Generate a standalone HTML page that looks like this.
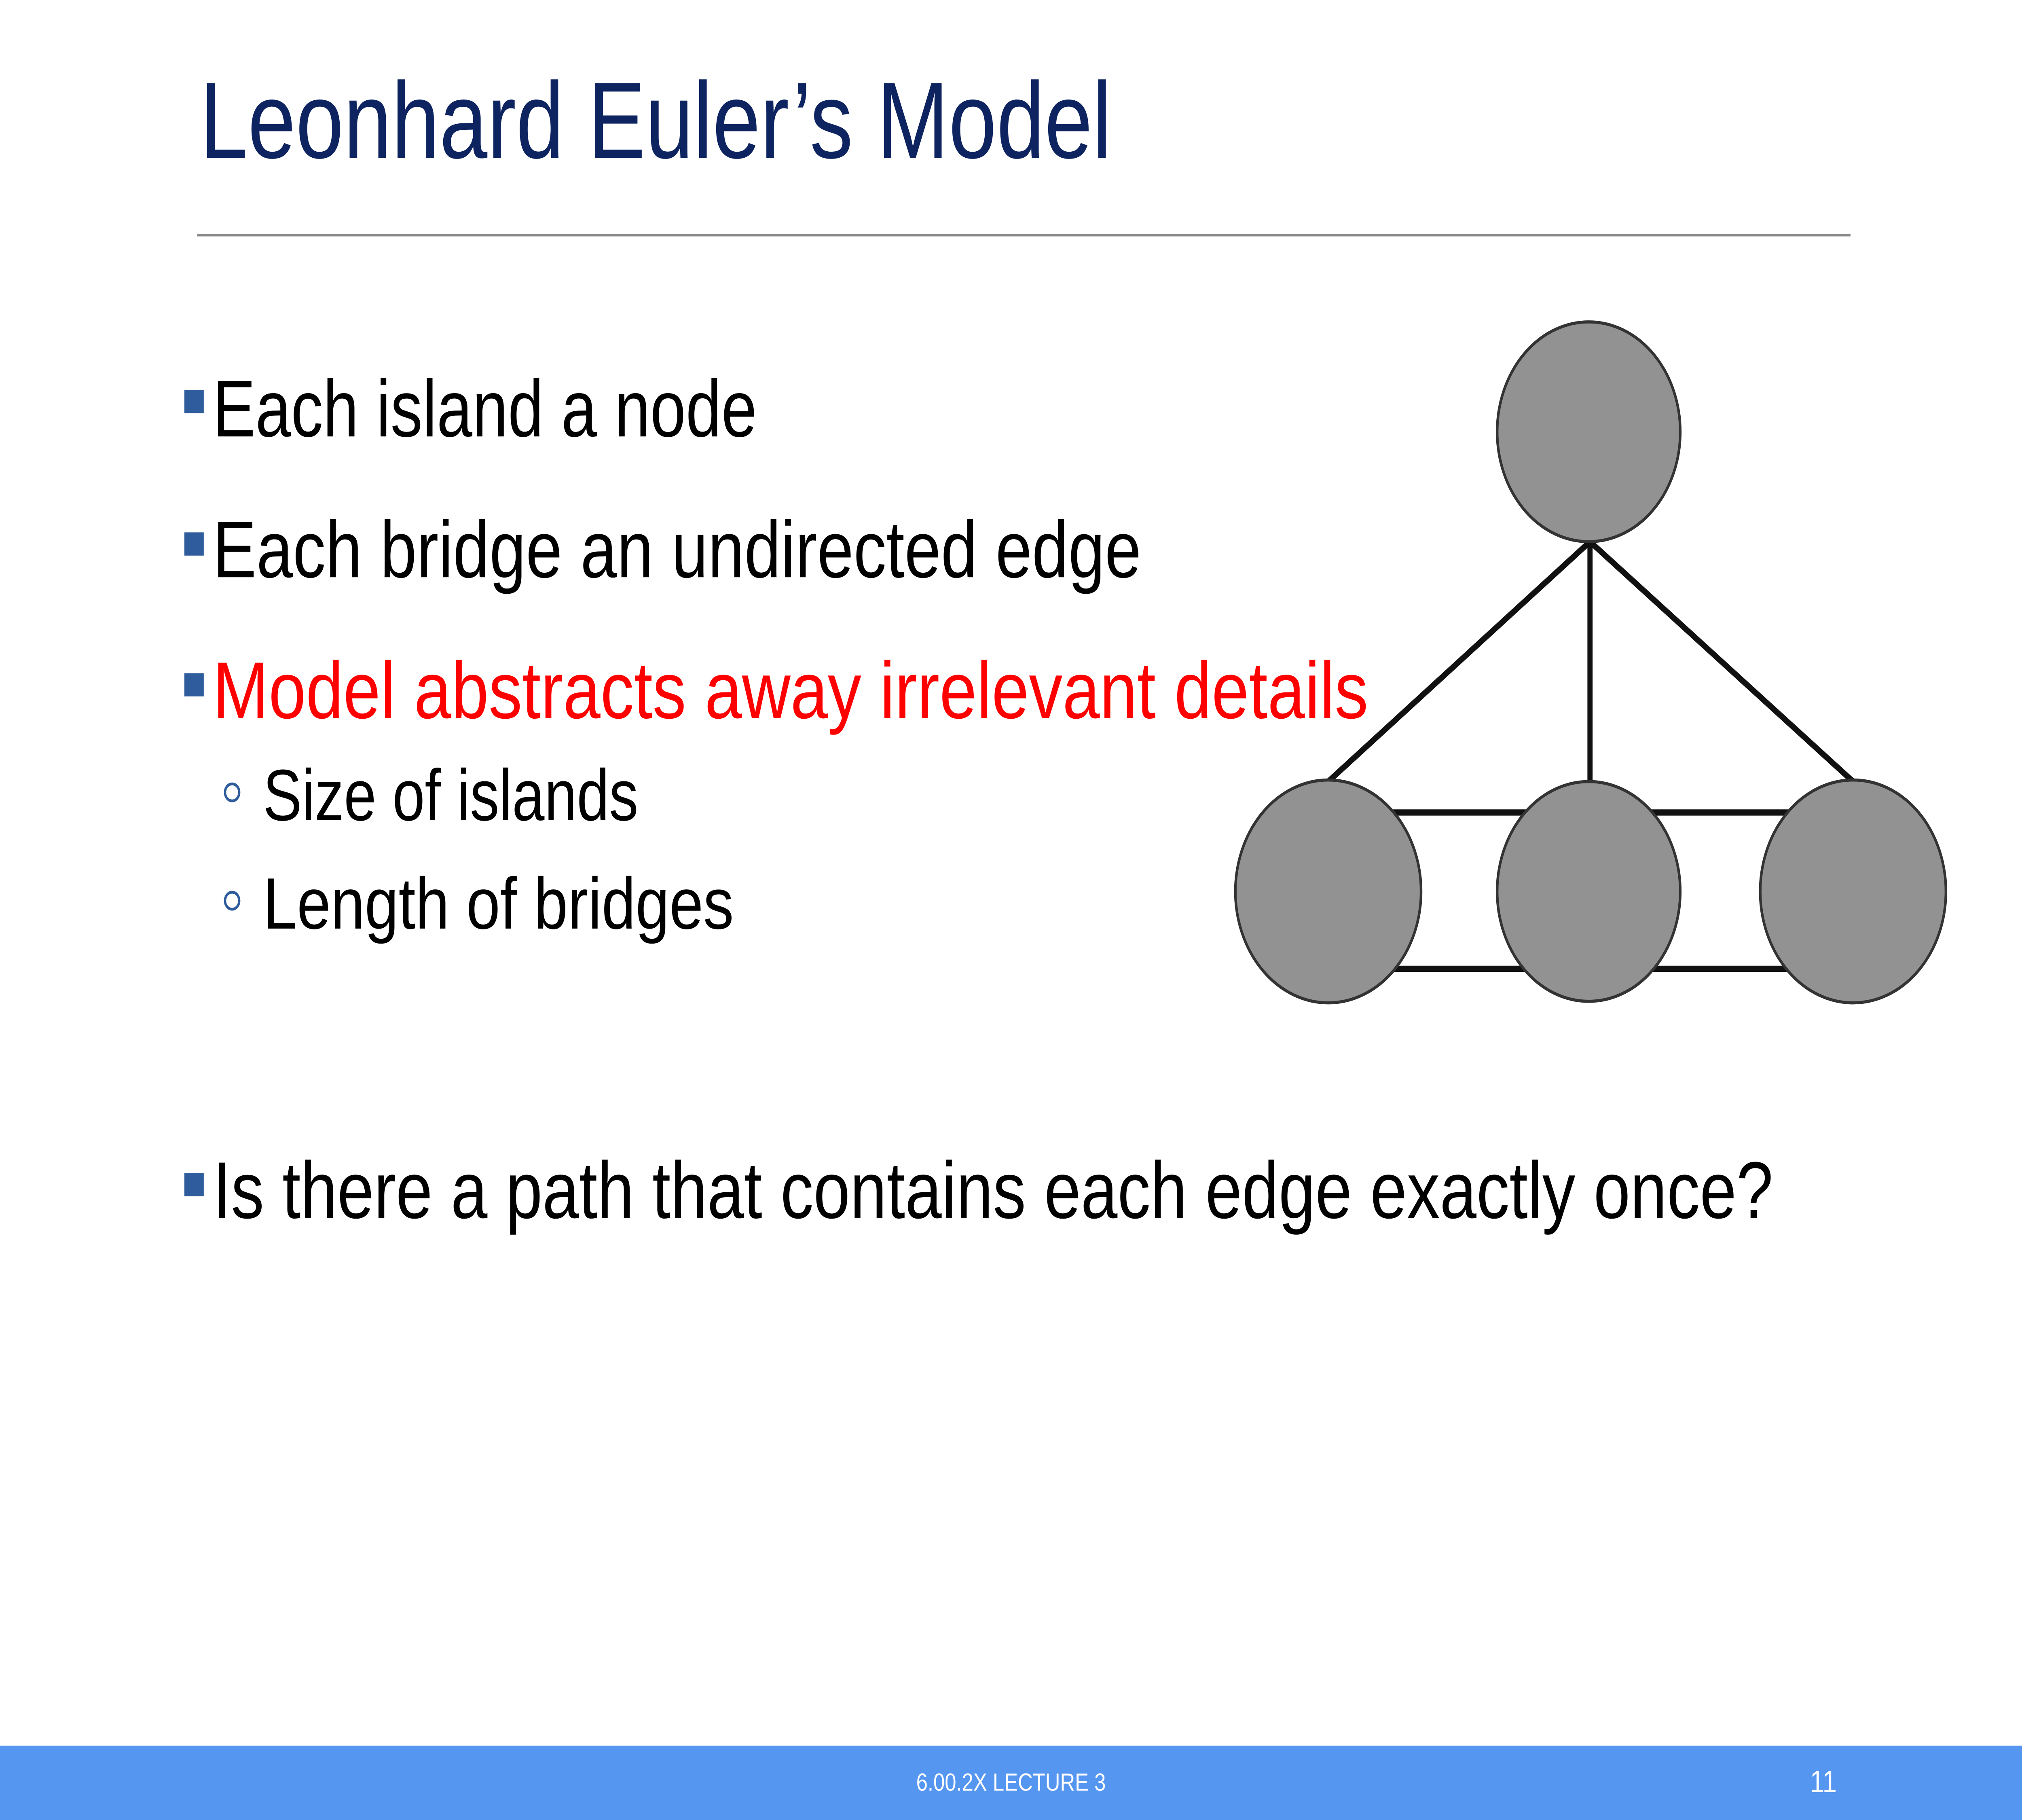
<!DOCTYPE html>
<html><head><meta charset="utf-8"><style>
html,body{margin:0;padding:0;background:#fff;overflow:hidden;width:100%;height:100%}
svg{display:block;position:fixed;left:0;top:0;width:100vw;height:100vh}
</style></head><body>
<svg viewBox="0 0 1568 1176" preserveAspectRatio="none" xmlns="http://www.w3.org/2000/svg" font-family="Liberation Sans, sans-serif">
<rect width="1568" height="1176" fill="#fff"/>
<text x="155" y="102" font-size="70" fill="#0e2461" textLength="707" lengthAdjust="spacingAndGlyphs">Leonhard Euler’s Model</text>
<line x1="153" y1="152" x2="1435" y2="152" stroke="#8a8a8a" stroke-width="1.5"/>
<rect x="143" y="252" width="15" height="15" fill="#2f5c9c"/>
<text x="165" y="282" font-size="52" fill="#000" textLength="422" lengthAdjust="spacingAndGlyphs">Each island a node</text>
<rect x="143" y="344" width="15" height="15" fill="#2f5c9c"/>
<text x="165" y="373" font-size="52" fill="#000" textLength="720" lengthAdjust="spacingAndGlyphs">Each bridge an undirected edge</text>
<rect x="143" y="435" width="15" height="15" fill="#2f5c9c"/>
<text x="165" y="464" font-size="52" fill="#ff0000" textLength="896" lengthAdjust="spacingAndGlyphs">Model abstracts away irrelevant details</text>
<circle cx="180" cy="512" r="5.5" fill="none" stroke="#2f5c9c" stroke-width="1.8"/>
<text x="204" y="530" font-size="47" fill="#000" textLength="291" lengthAdjust="spacingAndGlyphs">Size of islands</text>
<circle cx="180" cy="582" r="5.5" fill="none" stroke="#2f5c9c" stroke-width="1.8"/>
<text x="204" y="600" font-size="47" fill="#000" textLength="365" lengthAdjust="spacingAndGlyphs">Length of bridges</text>
<rect x="143" y="758" width="15" height="15" fill="#2f5c9c"/>
<text x="165" y="787" font-size="52" fill="#000" textLength="1210" lengthAdjust="spacingAndGlyphs">Is there a path that contains each edge exactly once?</text>
<g stroke="#111" stroke-width="4" fill="none">
<line x1="1233" y1="350" x2="1030" y2="505"/>
<line x1="1233" y1="350" x2="1233" y2="505"/>
<line x1="1233" y1="350" x2="1437" y2="505"/>
<line x1="1080" y1="525" x2="1390" y2="525"/>
<line x1="1080" y1="626" x2="1390" y2="626"/>
</g>
<g fill="#929292" stroke="#333" stroke-width="2">
<circle cx="1232" cy="279" r="71"/>
<circle cx="1030" cy="576" r="72"/>
<circle cx="1232" cy="576" r="71"/>
<circle cx="1437" cy="576" r="72"/>
</g>
<rect x="0" y="1128" width="1568" height="48" fill="#5596f0"/>
<text x="784" y="1157" font-size="16" fill="#fff" text-anchor="middle" textLength="147" lengthAdjust="spacingAndGlyphs">6.00.2X LECTURE 3</text>
<text x="1414" y="1158" font-size="20" fill="#fff" text-anchor="middle">11</text>
</svg>
</body></html>
